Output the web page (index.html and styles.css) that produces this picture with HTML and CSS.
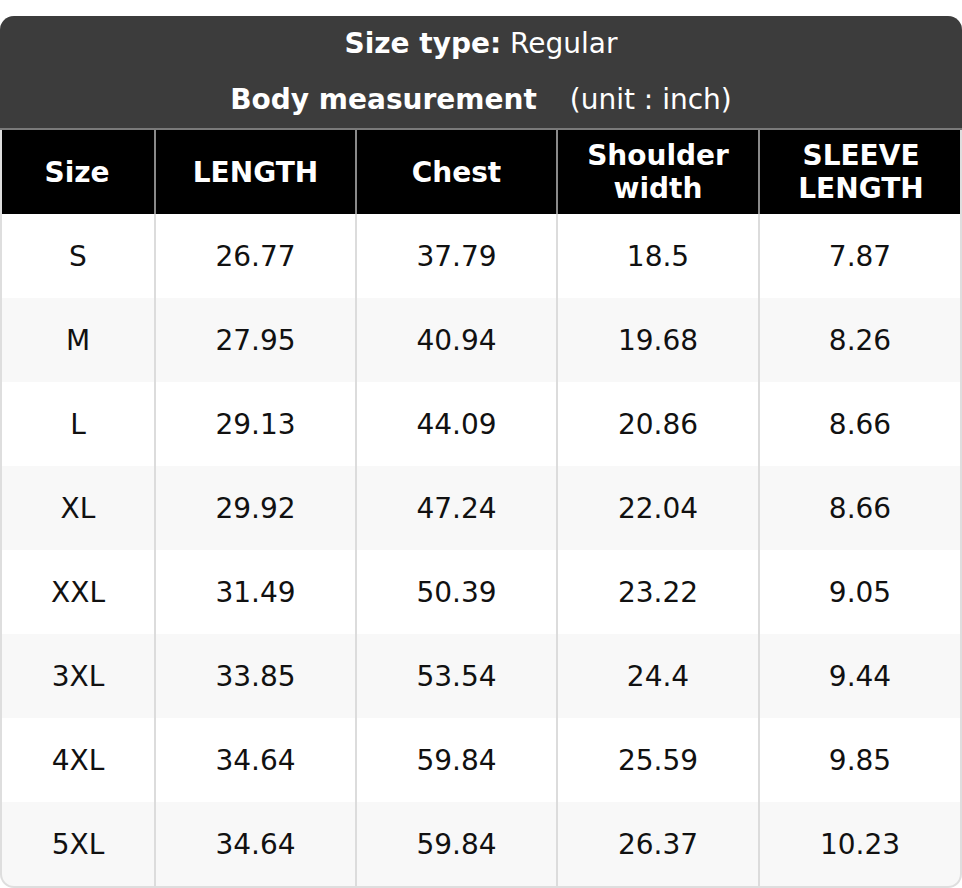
FILE: index.html
```html
<!DOCTYPE html>
<html>
<head>
<meta charset="utf-8">
<link rel="stylesheet" href="styles.css">
</head>
<body>
<div class="card">
  <div class="title">
    <div class="title-line"><b>Size type:</b> Regular</div>
    <div class="title-line"><b>Body measurement</b> <span class="unit">(unit : inch)</span></div>
  </div>
  <div class="grid">
    <div class="row head">
      <div class="cell">Size</div>
      <div class="cell">LENGTH</div>
      <div class="cell">Chest</div>
      <div class="cell">Shoulder<br>width</div>
      <div class="cell">SLEEVE<br>LENGTH</div>
    </div>
    <div class="body">
      <div class="row"><div class="cell">S</div><div class="cell">26.77</div><div class="cell">37.79</div><div class="cell">18.5</div><div class="cell">7.87</div></div>
      <div class="row"><div class="cell">M</div><div class="cell">27.95</div><div class="cell">40.94</div><div class="cell">19.68</div><div class="cell">8.26</div></div>
      <div class="row"><div class="cell">L</div><div class="cell">29.13</div><div class="cell">44.09</div><div class="cell">20.86</div><div class="cell">8.66</div></div>
      <div class="row"><div class="cell">XL</div><div class="cell">29.92</div><div class="cell">47.24</div><div class="cell">22.04</div><div class="cell">8.66</div></div>
      <div class="row"><div class="cell">XXL</div><div class="cell">31.49</div><div class="cell">50.39</div><div class="cell">23.22</div><div class="cell">9.05</div></div>
      <div class="row"><div class="cell">3XL</div><div class="cell">33.85</div><div class="cell">53.54</div><div class="cell">24.4</div><div class="cell">9.44</div></div>
      <div class="row"><div class="cell">4XL</div><div class="cell">34.64</div><div class="cell">59.84</div><div class="cell">25.59</div><div class="cell">9.85</div></div>
      <div class="row"><div class="cell">5XL</div><div class="cell">34.64</div><div class="cell">59.84</div><div class="cell">26.37</div><div class="cell">10.23</div></div>
    </div>
  </div>
</div>
</body>
</html>
```
FILE: styles.css
```css
html, body {
  margin: 0;
  padding: 0;
  background: #ffffff;
}
body {
  padding-top: 16px;
  font-family: "DejaVu Sans", "Liberation Sans", sans-serif;
  font-size: 28px;
}
.card {
  width: 962px;
  box-sizing: border-box;
  background: #dedede;
  border-radius: 14px;
  padding: 0 2px 2px;
}
.title {
  background: #3c3c3c;
  color: #ffffff;
  margin: 0 -2px;
  border-radius: 14px 14px 0 0;
  height: 112px;
  border-bottom: 2px solid #7a7a7a;
}
.title-line {
  height: 56px;
  line-height: 55px;
  text-align: center;
  white-space: pre;
}
.title-line b {
  font-weight: bold;
}
.unit {
  margin-left: 24px;
}
.grid {
  border-radius: 0 0 12px 12px;
  overflow: hidden;
}
.row {
  display: grid;
  grid-template-columns: 152px 201px 201px 202px 202px;
  height: 84px;
}
.cell {
  display: flex;
  align-items: center;
  justify-content: center;
  text-align: center;
  box-sizing: border-box;
  color: #111111;
}
.cell + .cell {
  border-left: 2px solid #dcdcdc;
}
.head {
  background: #000000;
  margin: 0 -2px;
  grid-template-columns: 154px 201px 201px 202px 204px;
}
.head .cell {
  color: #ffffff;
  font-weight: bold;
  line-height: 33px;
}
.head .cell + .cell {
  border-left: 2px solid #8a8a8a;
}
.body .row {
  background: #ffffff;
}
.body .row:nth-child(even) {
  background: #f8f8f8;
}
```
